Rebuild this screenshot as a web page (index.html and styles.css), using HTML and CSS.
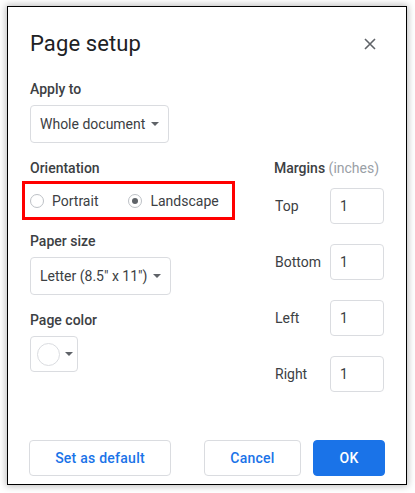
FILE: index.html
```html
<!DOCTYPE html>
<html>
<head>
<meta charset="utf-8">
<link rel="stylesheet" href="styles.css">
</head>
<body>
<div class="stage">
  <div class="dialog">
    <div class="header">
      <div class="title">Page setup</div>
      <svg class="close" width="12" height="12" viewBox="0 0 12 12"><path d="M1 1L11 11M11 1L1 11" stroke="#5f6368" stroke-width="1.6" fill="none"/></svg>
    </div>
    <div class="content">
      <div class="apply">
        <div class="label">Apply to</div>
        <div class="select apply-select"><span>Whole document</span><span class="caret"></span></div>
      </div>
      <div class="leftcol">
        <div class="label">Orientation</div>
        <div class="highlight">
          <div class="radio"><span class="circle"></span><span>Portrait</span></div>
          <div class="radio"><span class="circle checked"></span><span>Landscape</span></div>
        </div>
        <div class="label paper-label">Paper size</div>
        <div class="select paper-select"><span>Letter (8.5" x 11")</span><span class="caret"></span></div>
        <div class="label color-label">Page color</div>
        <div class="colorbtn"><span class="swatch"></span><span class="caret"></span></div>
      </div>
      <div class="rightcol">
        <div class="label">Margins <span class="muted">(inches)</span></div>
        <div class="mrow"><span class="mlabel">Top</span><div class="minput">1</div></div>
        <div class="mrow"><span class="mlabel">Bottom</span><div class="minput">1</div></div>
        <div class="mrow"><span class="mlabel">Left</span><div class="minput">1</div></div>
        <div class="mrow"><span class="mlabel">Right</span><div class="minput">1</div></div>
      </div>
    </div>
    <div class="footer">
      <div class="btn default-btn">Set as default</div>
      <div class="spacer"></div>
      <div class="btn cancel-btn">Cancel</div>
      <div class="btn ok-btn">OK</div>
    </div>
  </div>
</div>
</body>
</html>
```
FILE: styles.css
```css
* { box-sizing: border-box; }
html, body { margin: 0; padding: 0; background: #fff; }
body { font-family: Roboto, "Liberation Sans", Arial, sans-serif; color: #3c4043; }
.stage { padding: 6px 8px 8px 7px; }
.dialog {
  width: 400px;
  height: 479px;
  border: 1px solid #000;
  background: #fff;
  box-shadow: 0 0 7px 1px rgba(0,0,0,0.28);
  display: flex;
  flex-direction: column;
  padding: 0 21px 8px 22px;
}
.header {
  display: flex;
  align-items: center;
  justify-content: space-between;
  height: 72px;
  padding-top: 1px;
}
.title { font-size: 22px; color: #202124; letter-spacing: 0.1px; }
.close { margin-right: 9px; }
.content {
  display: grid;
  grid-template-columns: 244px 1fr;
}
.apply { grid-column: 1 / 3; }
.label { font-size: 14px; line-height: 20px; font-weight: 500; color: #3c4043; }
.muted { color: #9aa0a6; font-weight: 400; }
.select {
  margin-top: 6px;
  height: 38px;
  border: 1px solid #dadce0;
  border-radius: 4px;
  display: inline-flex;
  align-items: center;
  padding: 0 9px 0 9px;
  font-size: 14px;
  color: #3c4043;
}
.apply-select { width: 139px; justify-content: space-between; margin-bottom: 15px; }
.paper-select { width: 141px; height: 38px; justify-content: space-between; }
.caret {
  width: 0; height: 0;
  border-left: 4px solid transparent;
  border-right: 4px solid transparent;
  border-top: 4px solid #5f6368;
}
.leftcol { display: flex; flex-direction: column; align-items: flex-start; }
.highlight {
  margin-top: 3px;
  margin-left: -8px;
  width: 213px;
  height: 39px;
  border: 3px solid #f00;
  display: flex;
  align-items: center;
  padding-left: 5px;
  gap: 30px;
}
.radio { display: flex; align-items: center; gap: 8px; font-size: 14px; color: #3c4043; }
.circle {
  width: 14px; height: 14px;
  border: 1px solid #bdc1c6;
  border-radius: 50%;
  display: inline-flex;
  align-items: center;
  justify-content: center;
}
.circle.checked::after {
  content: "";
  width: 6px; height: 6px;
  border-radius: 50%;
  background: #5f6368;
}
.paper-label { margin-top: 11px; }
.color-label { margin-top: 15px; }
.colorbtn {
  margin-top: 6px;
  width: 48px; height: 36px;
  border: 1px solid #dadce0;
  border-radius: 4px;
  display: flex;
  align-items: center;
  padding-left: 6px;
  gap: 5px;
}
.swatch { width: 23px; height: 23px; border: 1px solid #dadce0; border-radius: 50%; }
.rightcol { display: flex; flex-direction: column; gap: 20px; }
.rightcol .label { margin-bottom: -10px; }
.mrow { display: flex; align-items: center; justify-content: space-between; width: 110px; }
.mlabel { font-size: 14px; color: #3c4043; padding-left: 1px; padding-bottom: 1px; }
.minput {
  width: 54px; height: 36px;
  border: 1px solid #dadce0;
  border-radius: 4px;
  display: flex;
  align-items: center;
  padding-left: 9px;
  font-size: 14px;
  color: #3c4043;
}
.footer { margin-top: auto; display: flex; align-items: center; margin-left: -1px; }
.spacer { flex: 1; }
.btn {
  height: 36px;
  border: 1px solid #dadce0;
  border-radius: 4px;
  display: flex;
  align-items: center;
  justify-content: center;
  font-size: 14px;
  font-weight: 500;
  letter-spacing: 0.25px;
  color: #1a73e8;
}
.default-btn { width: 142px; }
.cancel-btn { width: 97px; margin-right: 12px; }
.ok-btn { width: 72px; background: #1a73e8; border-color: #1a73e8; color: #fff; }
```
